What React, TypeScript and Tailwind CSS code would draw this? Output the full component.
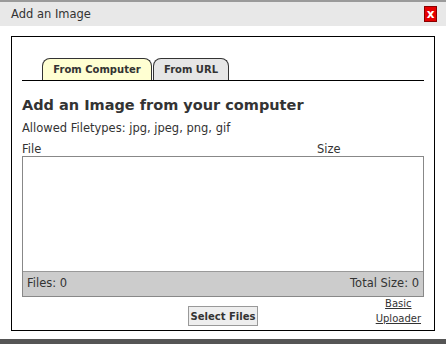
export default function App() {
  return (
    <div
      className="relative h-[344px] w-[446px] overflow-hidden bg-white text-[#333]"
      style={{ fontFamily: '"DejaVu Sans", Verdana, sans-serif' }}
    >
      <div className="h-[2px] bg-[#9a9a9a]" />
      <div className="flex h-[24px] items-center justify-between bg-[#e8e8e8] pl-[11px] pr-[9px]">
        <span className="pt-[1px] text-[11.5px]">Add an Image</span>
        <span className="flex h-[16px] w-[13px] items-center justify-center border border-[#8a0000] bg-[#e60000] text-[12px] font-bold leading-none text-white">
          x
        </span>
      </div>
      <div className="px-[11px] pt-[10px]">
        <div className="h-[295px] border border-black px-[10px] pt-[21px]">
          <div className="flex items-end gap-[1px] border-b border-black pl-[20px]">
            <div className="flex h-[22px] w-[110px] items-center justify-center rounded-t-[8px] border border-b-0 border-[#333] bg-[#ffffd2] text-[10px] font-bold">
              From Computer
            </div>
            <div className="flex h-[22px] w-[76px] items-center justify-center rounded-t-[8px] border border-b-0 border-[#333] bg-[#e6e6e6] text-[10px] font-bold">
              From URL
            </div>
          </div>
          <h1 className="mt-[14px] text-[14.5px] font-bold leading-[20px]">Add an Image from your computer</h1>
          <p className="mt-[6px] text-[11.5px] leading-[14px]">Allowed Filetypes: jpg, jpeg, png, gif</p>
          <div className="mt-[7px] flex text-[11.5px] leading-[14px]">
            <span className="flex-1">File</span>
            <span className="w-[107px]">Size</span>
          </div>
          <div className="flex h-[141px] flex-col border border-[#888]">
            <div className="flex-1" />
            <div className="flex h-[25px] items-center justify-between border-t border-[#999] bg-[#cccccc] px-[4px] text-[11.5px]">
              <span>Files: 0</span>
              <span>Total Size: 0</span>
            </div>
          </div>
          <div className="relative mt-[9px] flex justify-center">
            <button className="h-[20px] border border-[#999] bg-[#eeeeee] px-[2px] text-[10px] font-bold">
              Select Files
            </button>
            <a className="absolute right-[3px] top-[-10px] text-center text-[10px] leading-[15px] underline">
              Basic
              <br />
              Uploader
            </a>
          </div>
        </div>
      </div>
      <div className="absolute bottom-0 left-0 h-[5px] w-full bg-[#555]" />
    </div>
  );
}
